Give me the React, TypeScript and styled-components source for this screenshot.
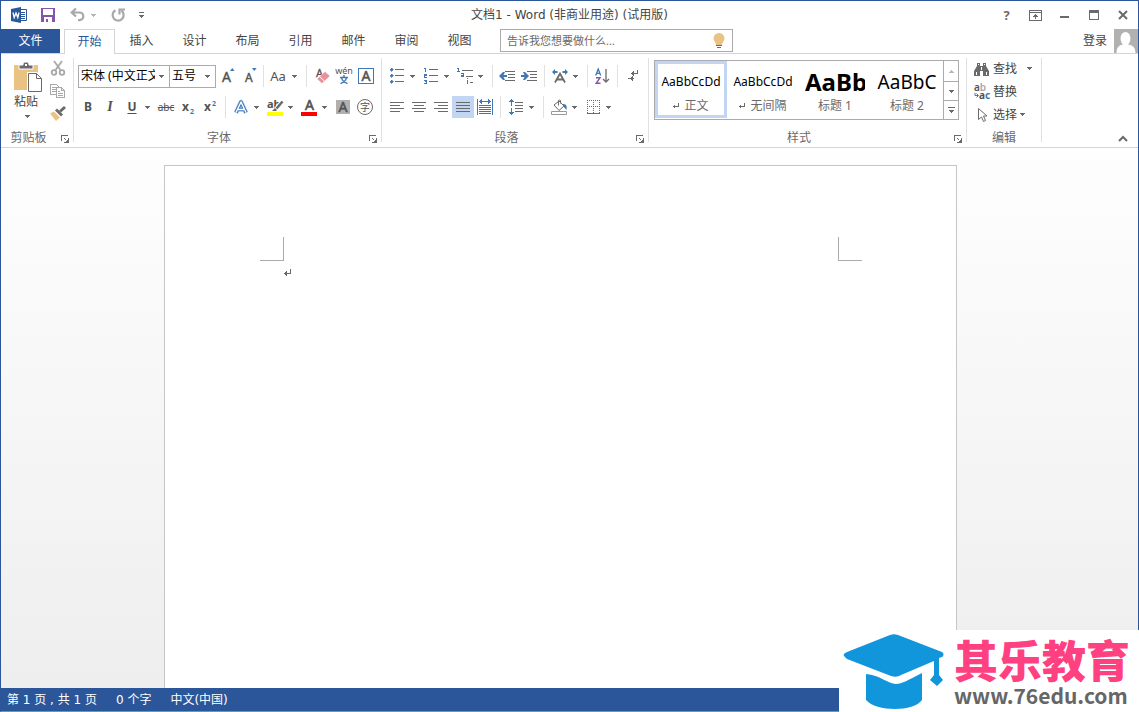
import React from "react";
import styled, { createGlobalStyle, css } from "styled-components";

const c = {
  blue: "#2b579a",
  icon: "#6a6a6a",
  iconDark: "#525252",
  accent: "#3f78b5",
  text: "#444444",
  muted: "#6a6a6a",
  line: "#d5d5d5",
  frame: "#ababab",
  select: "#c2d5f2",
  tan: "#eac282",
};

const sans = `"Noto Sans", "Noto Sans CJK SC", sans-serif`;
const wideSans = `"DejaVu Sans", "Noto Sans CJK SC", sans-serif`;

const GlobalStyle = createGlobalStyle`
  * { box-sizing: border-box; }
  body { margin: 0; font: 12px/16px ${sans}; color: ${c.text}; }
  button, input, select { font: inherit; color: inherit; }
  button { border: 0; padding: 0; background: none; cursor: pointer; }
  svg { display: block; flex: none; overflow: visible; }
`;

const Window = styled.div`
  display: flex;
  flex-direction: column;
  height: 100vh;
  min-height: 400px;
  border: 1px solid ${c.blue};
  border-bottom-color: #5a9fb5;
  background: #fff;
  overflow: hidden;
`;

const TitleBar = styled.header`
  flex: none;
  display: grid;
  grid-template-columns: 1fr auto 1fr;
  align-items: center;
  height: 28px;
`;
const Title = styled.h1`
  margin: 0;
  font: 400 12px/16px ${wideSans};
`;
const QuickAccess = styled.div`
  display: flex;
  align-items: center;
  padding-left: 10px;
`;
const QuickButton = styled.button<{ $gap: number }>`
  margin-right: ${(p) => p.$gap}px;
`;
const WindowControls = styled.div`
  display: flex;
  justify-content: flex-end;
  padding-right: 1px;
`;
const WindowButton = styled.button`
  display: grid;
  place-items: center;
  width: 29px;
  height: 24px;
  font-size: 13px;
  font-weight: 700;
  color: ${c.icon};
`;

const TabRow = styled.nav`
  flex: none;
  display: flex;
  height: 25px;
  border-bottom: 1px solid ${c.line};
`;
const FileTab = styled.button`
  width: 59px;
  margin-right: 4px;
  background: ${c.blue};
  color: #fff;
`;
const Tab = styled.button<{ $active?: boolean }>`
  width: 53px;
  ${(p) =>
    p.$active &&
    css`
      width: 51px;
      height: 25px;
      border: 1px solid ${c.line};
      border-bottom: 0;
      background: #fff;
      color: ${c.blue};
    `}
`;
const TellMe = styled.label`
  display: flex;
  align-items: center;
  width: 233px;
  height: 23px;
  margin-left: 14px;
  padding: 0 7px 0 6px;
  border: 1px solid ${c.frame};
`;
const TellMeInput = styled.input`
  flex: 1;
  min-width: 0;
  padding: 0;
  border: 0;
  outline: 0;
  font-size: 11px;
  &::placeholder { color: ${c.muted}; opacity: 1; }
`;
const Account = styled.button`
  display: flex;
  align-items: center;
  gap: 7px;
  height: 24px;
  margin-left: auto;
`;

const Ribbon = styled.section`
  flex: none;
  display: flex;
  height: 94px;
  padding: 4px 0 5px;
  border-bottom: 1px solid ${c.line};
`;
const Group = styled.div<{ $width: number }>`
  flex: none;
  display: flex;
  flex-direction: column;
  width: ${(p) => p.$width}px;
  border-right: 1px solid #e1e1e1;
`;
const GroupBody = styled.div`
  flex: 1;
  padding-left: 4px;
`;
const GroupFooter = styled.div`
  display: flex;
  align-items: center;
  height: 16px;
  margin-bottom: -4px;
`;
const GroupLabel = styled.span`
  flex: 1;
  text-align: center;
  color: ${c.muted};
`;
const Launcher = styled.button`
  width: 17px;
  padding: 1px 4px 0 5px;
`;
const Row = styled.div`
  display: flex;
  align-items: center;
  height: 22px;
  margin-top: 7px;
  & + & { margin-top: 9px; }
`;
const TextRow = styled(Row)`
  margin-left: -1px;
`;
const Tool = styled.button<{ $on?: boolean; $wide?: boolean }>`
  display: grid;
  place-items: center;
  flex: none;
  width: ${(p) => (p.$wide ? 24 : 22)}px;
  height: 22px;
  background: ${(p) => (p.$on ? c.select : "none")};
`;
const ArrowButton = styled.button`
  flex: none;
  width: 12px;
  height: 22px;
  padding-left: 2px;
`;
const Divider = styled.span<{ $width?: number }>`
  flex: none;
  width: ${(p) => p.$width ?? 9}px;
  height: 22px;
  background: linear-gradient(#e1e1e1, #e1e1e1) center / 1px 100% no-repeat;
`;
const Letter = styled.span<{ $size?: number; $bold?: boolean; $italic?: boolean }>`
  font-size: ${(p) => p.$size ?? 12}px;
  font-weight: ${(p) => (p.$bold ? 700 : 400)};
  font-style: ${(p) => (p.$italic ? "italic" : "normal")};
  color: ${c.iconDark};
`;
const SerifItalic = styled(Letter)`
  font-family: "Liberation Serif", serif;
`;
const Underlined = styled(Letter)`
  text-decoration: underline;
  text-underline-offset: 2px;
`;
const Struck = styled(Letter)`
  text-decoration: line-through;
`;

const Combo = styled.label<{ $width: number; $joined?: boolean }>`
  display: flex;
  align-items: center;
  justify-content: space-between;
  width: ${(p) => p.$width}px;
  height: 23px;
  padding: 0 5px 0 2px;
  border: 1px solid ${c.frame};
  color: #000;
  ${(p) => p.$joined && "border-right: 0;"}
`;
const ComboSelect = styled.select`
  flex: 1;
  min-width: 0;
  margin-right: 4px;
  padding: 0;
  border: 0;
  outline: 0;
  background: none;
  appearance: none;
  text-overflow: clip;
`;
const Combos = styled.div`
  display: flex;
  margin-left: 1px;
  margin-right: 1px;
`;

const Clipboard = styled.div`
  display: flex;
  justify-content: space-between;
  padding: 4px 7px 0 9px;
`;
const PasteButton = styled.button`
  display: flex;
  flex-direction: column;
  align-items: flex-start;
  height: 62px;
`;
const PasteText = styled.span`
  margin-top: 1px;
  line-height: 16px;
`;
const PasteArrow = styled.span`
  padding: 5px 0 0 11px;
`;
const ClipTools = styled.div`
  display: flex;
  flex-direction: column;
  gap: 7px;
  margin-top: -2px;
`;

const Gallery = styled.div`
  display: flex;
  width: 305px;
  height: 60px;
  margin: 2px 0 0 1px;
  border: 1px solid ${c.frame};
`;
const StyleItem = styled.button<{ $active?: boolean }>`
  display: flex;
  flex-direction: column;
  align-items: center;
  width: 72px;
  height: 57px;
  border: 3px solid ${(p) => (p.$active ? c.select : "transparent")};
  padding-top: 1px;
  overflow: hidden;
`;
const Sample = styled.span<{ $size: number; $bold?: boolean }>`
  display: block;
  flex: none;
  width: 60px;
  height: 33px;
  line-height: 34px;
  font-size: ${(p) => p.$size}px;
  font-weight: ${(p) => (p.$bold ? 700 : 400)};
  color: #000;
  white-space: nowrap;
  overflow: hidden;
`;
const StyleName = styled.span`
  display: flex;
  align-items: center;
  gap: 5px;
  height: 16px;
  color: ${c.muted};
`;
const GalleryScroll = styled.div`
  display: grid;
  grid-template-rows: 20px 19px 19px;
  width: 15px;
  border-left: 1px solid ${c.frame};
`;
const ScrollButton = styled.button`
  display: grid;
  place-items: center;
  & + & { border-top: 1px solid ${c.frame}; }
`;

const EditList = styled.div`
  margin-top: -1px;
  padding-left: 3px;
`;
const EditButton = styled.button<{ $gap?: number }>`
  display: grid;
  grid-template-columns: 16px auto auto;
  align-items: center;
  justify-content: start;
  column-gap: 3px;
  height: 23px;
  & > :nth-child(3) { margin-left: ${(p) => p.$gap ?? 0}px; }
`;
const Collapse = styled.button`
  align-self: flex-end;
  margin: 0 10px 0 auto;
`;

const Workspace = styled.main`
  flex: 1;
  min-height: 0;
  display: flex;
  justify-content: center;
  padding: 17px 18px 0 0;
  background: linear-gradient(#fefefe, #eeeeee);
`;
const Page = styled.article`
  width: 793px;
  padding: 71px 94px 0 95px;
  border: 1px solid #c6c6c6;
  border-bottom: 0;
  background: #fff;
`;
const Margins = styled.div`
  display: flex;
  justify-content: space-between;
`;
const Corner = styled.span<{ $side: "left" | "right" }>`
  width: 24px;
  height: 24px;
  border-bottom: 1px solid ${c.frame};
  ${(p) => (p.$side === "left" ? "border-right" : "border-left")}: 1px solid ${c.frame};
`;
const Paragraph = styled.p`
  margin: 8px 0 0 24px;
`;

const StatusBar = styled.footer`
  flex: none;
  display: flex;
  align-items: center;
  gap: 19px;
  height: 23px;
  padding-left: 6px;
  background: ${c.blue};
  font-family: ${wideSans};
  color: #fff;
`;

const Brand = styled.a`
  position: absolute;
  right: 0;
  bottom: 0;
  display: flex;
  gap: 10px;
  width: 300px;
  height: 82px;
  padding: 3px 0 0 5px;
  background: #fff;
  text-decoration: none;
`;
const BrandText = styled.span`
  display: flex;
  flex-direction: column;
  white-space: nowrap;
`;
const BrandName = styled.span`
  font: 900 44px/52px "Noto Sans CJK SC", sans-serif;
  color: #ff4081;
`;
const BrandSite = styled.span`
  font: 700 21px/20px "Noto Sans CJK SC", sans-serif;
  color: #666;
`;

type IconProps = { w: number; h: number; crisp?: boolean; children: React.ReactNode };
const Icon = ({ w, h, crisp, children }: IconProps) => (
  <svg
    width={w}
    height={h}
    viewBox={`0 0 ${w} ${h}`}
    fill="none"
    stroke={c.icon}
    shapeRendering={crisp ? "crispEdges" : undefined}
    aria-hidden="true"
  >
    {children}
  </svg>
);

const Caret = ({ color = c.icon }: { color?: string }) => (
  <Icon w={5} h={3} crisp>
    <path d="M0 0h5v1H0zM1 1h3v1H1zM2 2h1v1H2z" fill={color} stroke="none" />
  </Icon>
);
const Arrow = ({ label }: { label: string }) => (
  <ArrowButton aria-label={label}>
    <Caret />
  </ArrowButton>
);
const ReturnMark = () => (
  <Icon w={7} h={7} crisp>
    <path d="M6 0h1v5H0V4h6zM1 3h1v3H1zM2 2h1v5H2z" fill={c.icon} stroke="none" />
  </Icon>
);
const SmallReturnMark = () => (
  <Icon w={6} h={6} crisp>
    <path d="M5 0h1v4H0V3h5zM1 2h1v3H1z" fill={c.icon} stroke="none" />
  </Icon>
);
const GroupFoot = ({ label, launcher = true }: { label: string; launcher?: boolean }) => (
  <GroupFooter>
    <GroupLabel>{label}</GroupLabel>
    {launcher && (
      <Launcher aria-label={`${label}设置`}>
        <Icon w={8} h={8} crisp>
          <path d="M0 0h7v1H1v5H0zM3 3h1v1H3zM4 4h1v1H4zM7 3h1v5H3V7h2V6h1V5h1z" fill={c.icon} stroke="none" />
        </Icon>
      </Launcher>
    )}
  </GroupFooter>
);

const lines = (rows: [number, number, number][]) =>
  rows.map(([x, y, w]) => <path key={`${x}-${y}`} d={`M${x} ${y + 0.5}h${w}`} />);

const SmallText = ({ x, y, size, fill = c.iconDark, children }: { x: number; y: number; size: number; fill?: string; children: React.ReactNode }) => (
  <text x={x} y={y} fontSize={size} fontWeight="700" fill={fill} stroke="none" fontFamily={sans}>
    {children}
  </text>
);

const styleItems = [
  { name: "正文", sample: "AaBbCcDd", size: 12, mark: true, active: true },
  { name: "无间隔", sample: "AaBbCcDd", size: 12, mark: true },
  { name: "标题 1", sample: "AaBb", size: 24, bold: true },
  { name: "标题 2", sample: "AaBbC", size: 19 },
];

const ClipboardGroup = () => (
  <Group $width={73}>
    <GroupBody>
      <Clipboard>
        <PasteButton>
          <Icon w={28} h={31}>
            <path d="M0 3h24v25H0z" fill={c.tan} stroke="none" />
            <path d="M5 3h4V2a2 2 0 0 1 2-2h2a2 2 0 0 1 2 2v1h4v4H5z" fill={c.icon} stroke="#fff" />
            <path d="M11 2h2v2h-2z" fill="#fff" stroke="none" />
            <path d="M14.500 11.500h8l5 5v13h-13z" fill="#fff" stroke="#fff" strokeWidth="3" />
            <path d="M14.500 11.500h8l5 5v13h-13zM22.500 11.500v5h5" fill="#fff" />
          </Icon>
          <PasteText>粘贴</PasteText>
          <PasteArrow>
            <Caret />
          </PasteArrow>
        </PasteButton>
        <ClipTools>
          <button aria-label="剪切">
            <Icon w={16} h={16}>
              <g stroke="#a8a8a8" strokeWidth="1.800">
                <path d="M4 1l6.500 9M12 1L5.500 10" />
                <circle cx="4" cy="12.500" r="2.300" />
                <circle cx="12" cy="12.500" r="2.300" />
              </g>
            </Icon>
          </button>
          <button aria-label="复制">
            <Icon w={16} h={16} crisp>
              <g stroke="#a8a8a8">
                <path d="M.5 1.500h6l3 3v7h-9zM2 4.500h4M2 6.500h4M2 8.500h4" />
                <path d="M6.500 4.500h5l3 3v7h-8z" fill="#fff" />
                <path d="M11.500 4.500v3h3M8 8.500h2M8 10.500h5M8 12.500h5" />
              </g>
            </Icon>
          </button>
          <button aria-label="格式刷">
            <Icon w={16} h={16}>
              <path d="M0 7.500l4-2 6 6-4 3.500z" fill={c.tan} stroke="none" />
              <path d="M5 4.500l2-2 6 6-2 2z" fill={c.icon} stroke="none" />
              <path d="M10 5.500L15 1" strokeWidth="3" />
            </Icon>
          </button>
        </ClipTools>
      </Clipboard>
    </GroupBody>
    <GroupFoot label="剪贴板" />
  </Group>
);

const FontGroup = () => (
  <Group $width={308}>
    <GroupBody>
      <TextRow>
        <Combos>
          <Combo $width={91} $joined>
            <ComboSelect aria-label="字体">
              <option>宋体 (中文正文)</option>
            </ComboSelect>
            <Caret />
          </Combo>
          <Combo $width={47}>
            <ComboSelect aria-label="字号">
              <option>五号</option>
            </ComboSelect>
            <Caret />
          </Combo>
        </Combos>
        <Tool aria-label="增大字号">
          <Icon w={14} h={16}>
            <text x="1" y="14" fontSize="14" fill={c.iconDark} stroke={c.iconDark} strokeWidth=".4" fontFamily={sans}>A</text>
            <path d="M9 3l2.300-3 2.300 3z" fill={c.accent} stroke="none" />
          </Icon>
        </Tool>
        <Tool aria-label="减小字号">
          <Icon w={14} h={16}>
            <text x="2" y="14" fontSize="12" fill={c.iconDark} stroke={c.iconDark} strokeWidth=".4" fontFamily={sans}>A</text>
            <path d="M9 0h4.600l-2.300 3z" fill={c.accent} stroke="none" />
          </Icon>
        </Tool>
        <Divider $width={5} />
        <Tool $wide aria-label="更改大小写">
          <Letter $size={13}>Aa</Letter>
        </Tool>
        <Arrow label="大小写选项" />
        <Divider />
        <Tool aria-label="清除格式">
          <Icon w={16} h={16}>
            <text x="2" y="9" fontSize="11" fill={c.iconDark} stroke={c.iconDark} strokeWidth=".3" fontFamily={sans}>A</text>
            <path d="M3 11l8-7.500 5 4.500-8 7.500z" fill="#e8909c" stroke="#fff" strokeWidth=".5" />
            <path d="M5.500 8.500l5 4.700" stroke="#fff" />
          </Icon>
        </Tool>
        <Tool aria-label="拼音指南">
          <Icon w={18} h={18}>
            <text x="9" y="7" fontSize="9" textAnchor="middle" fill={c.iconDark} stroke="none" fontFamily={sans}>wén</text>
            <g stroke={c.accent} strokeWidth="1.400">
              <path d="M9 8v2M5 10.500h8M6.500 10.500c.5 3 3 5 6 6M11.500 10.500c-.5 3-3 5-6 6" />
            </g>
          </Icon>
        </Tool>
        <Tool aria-label="字符边框">
          <Icon w={16} h={16}>
            <path d="M.5.5h15v15H.5z" stroke={c.accent} shapeRendering="crispEdges" />
            <text x="8" y="13" fontSize="14" textAnchor="middle" fill={c.iconDark} stroke={c.iconDark} strokeWidth=".5" fontFamily={sans}>A</text>
          </Icon>
        </Tool>
      </TextRow>
      <TextRow>
        <Tool aria-label="加粗"><Letter $bold>B</Letter></Tool>
        <Tool aria-label="倾斜"><SerifItalic $bold $italic $size={14}>I</SerifItalic></Tool>
        <Tool aria-label="下划线"><Underlined $bold>U</Underlined></Tool>
        <Arrow label="下划线选项" />
        <Tool aria-label="删除线"><Struck $size={10}>abc</Struck></Tool>
        <Tool aria-label="下标">
          <Icon w={12} h={14}>
            <SmallText x={0} y={11} size={12}>x</SmallText>
            <SmallText x={8} y={14} size={7} fill={c.accent}>2</SmallText>
          </Icon>
        </Tool>
        <Tool aria-label="上标">
          <Icon w={12} h={14}>
            <SmallText x={0} y={11} size={12}>x</SmallText>
            <SmallText x={8} y={6} size={7} fill={c.accent}>2</SmallText>
          </Icon>
        </Tool>
        <Divider />
        <Tool aria-label="文本效果">
          <Icon w={16} h={16}>
            <g fontSize="15" textAnchor="middle" fontFamily={sans} strokeLinejoin="round">
              <path d="M3 14L8 3l5 11M5 10h6" stroke="#bcd5ef" strokeWidth="5" />
              <path d="M3 13.500L8 3l5 10.500M5 10.500h6" stroke={c.accent} strokeWidth="3.400" />
              <path d="M3 13.500L8 3l5 10.500M5 10.500h6" stroke="#fff" strokeWidth="1.400" />
            </g>
          </Icon>
        </Tool>
        <Arrow label="文本效果选项" />
        <Tool aria-label="突出显示">
          <Icon w={16} h={18}>
            <SmallText x={0} y={10} size={11}>ab</SmallText>
            <path d="M15.500 3L8 12" stroke="#fff" strokeWidth="4" />
            <path d="M15.500 3.500L9.500 10.500" strokeWidth="2.500" />
            <path d="M5 13l3-3 2 2-1 1z" fill={c.icon} stroke="none" />
            <path d="M0 14h16v4H0z" fill="#ffff00" stroke="none" />
          </Icon>
        </Tool>
        <Arrow label="突出显示颜色" />
        <Tool aria-label="字体颜色">
          <Icon w={16} h={18}>
            <text x="8.500" y="12" fontSize="14" textAnchor="middle" fill={c.iconDark} stroke={c.iconDark} strokeWidth=".6" fontFamily={sans}>A</text>
            <path d="M0 14h16v4H0z" fill="#f00" stroke="none" />
          </Icon>
        </Tool>
        <Arrow label="字体颜色选项" />
        <Tool aria-label="字符底纹">
          <Icon w={14} h={14}>
            <path d="M0 0h14v14H0z" fill="#b0b0b0" stroke="none" />
            <text x="7" y="12" fontSize="14" textAnchor="middle" fill={c.iconDark} stroke={c.iconDark} strokeWidth=".5" fontFamily={sans}>A</text>
          </Icon>
        </Tool>
        <Tool aria-label="带圈字符">
          <Icon w={16} h={16}>
            <circle cx="8" cy="8" r="7.500" />
            <text x="8" y="11.500" fontSize="10" textAnchor="middle" fill={c.iconDark} stroke="none" fontFamily={sans}>字</text>
          </Icon>
        </Tool>
      </TextRow>
    </GroupBody>
    <GroupFoot label="字体" />
  </Group>
);

const OutdentLines = () => <>{lines([[6, 1, 10], [9, 4, 7], [9, 7, 7], [6, 10, 10]])}</>;

const ParagraphGroup = () => (
  <Group $width={267}>
    <GroupBody>
      <Row>
        <Tool aria-label="项目符号">
          <Icon w={14} h={16} crisp>
            {lines([[5, 1, 9], [5, 7, 9], [5, 13, 9]])}
            <path d="M0 1h3v1H0zM1 0h1v3H1zM0 7h3v1H0zM1 6h1v3H1zM0 13h3v1H0zM1 12h1v3H1z" fill={c.accent} stroke={c.accent} strokeWidth=".6" />
          </Icon>
        </Tool>
        <Arrow label="项目符号选项" />
        <Tool aria-label="编号">
          <Icon w={14} h={16} crisp>
            {lines([[5, 1, 9], [5, 7, 9], [5, 13, 9]])}
            <path d="M0 0h2v4H1V1H0zM0 6h3v2H1v1h2v1H0V7h2H0zM0 12h3v4H0v-1h2v-1H1v-1H0z" fill={c.accent} stroke="none" />
          </Icon>
        </Tool>
        <Arrow label="编号选项" />
        <Tool aria-label="多级列表">
          <Icon w={17} h={17} crisp>
            {lines([[5, 2, 11], [9, 8, 7], [13, 14, 3]])}
            <path d="M0 0h2v3h1v1H0V3h1V1H0zM4 5h3v4H4V7h2V6H4zM10 10h1v1h-1zM10 12h1v4h-1z" fill={c.accent} stroke="none" />
          </Icon>
        </Tool>
        <Arrow label="多级列表选项" />
        <Divider $width={8} />
        <Tool aria-label="减少缩进">
          <Icon w={16} h={12}>
            <g shapeRendering="crispEdges"><OutdentLines /></g>
            <path d="M0 6l4-4h2L4.500 5H8v2H4.500L6 10H4z" fill={c.accent} stroke="none" />
          </Icon>
        </Tool>
        <Tool aria-label="增加缩进">
          <Icon w={16} h={12}>
            <g shapeRendering="crispEdges"><OutdentLines /></g>
            <path d="M8 6L4 2H2l1.500 3H0v2h3.500L2 10h2z" fill={c.accent} stroke="none" />
          </Icon>
        </Tool>
        <Divider />
        <Tool aria-label="中文版式">
          <Icon w={16} h={14}>
            <path d="M3 13.500l5-9 5 9M5 10.500h6" strokeWidth="1.800" />
            <path d="M0 3l3-3v2h2.500v2H3v2zM16 3l-3-3v2h-2.500v2H13v2z" fill={c.accent} stroke="none" />
          </Icon>
        </Tool>
        <Arrow label="中文版式选项" />
        <Divider $width={8} />
        <Tool aria-label="排序">
          <Icon w={14} h={17}>
            <path d="M.7 7.500L3.200 1l2.500 6.500M1.500 5.300h3.500" stroke={c.accent} strokeWidth="1.300" />
            <path d="M1 9.700h4L1.200 15.300h4.300" stroke="#8a54ab" strokeWidth="1.400" />
            <path d="M11 1v13M8 11l3 3 3-3" strokeWidth="1.300" />
          </Icon>
        </Tool>
        <Divider />
        <Tool aria-label="显示编辑标记">
          <Icon w={10} h={14} crisp>
            <path d="M9 1h1v4H5v1H4V5H3V4h1V3h1v1h4zM5 2h1v5H5zM0 9h3V8h1V7h1v5H4v-1H3v-1H0zM5 9h1v1H5z" fill={c.icon} stroke="none" />
          </Icon>
        </Tool>
      </Row>
      <Row>
        <Tool aria-label="左对齐">
          <Icon w={14} h={12} crisp>{lines([[0, 1, 14], [0, 4, 10], [0, 7, 14], [0, 10, 10]])}</Icon>
        </Tool>
        <Tool aria-label="居中">
          <Icon w={14} h={12} crisp>{lines([[0, 1, 14], [2, 4, 10], [0, 7, 14], [2, 10, 10]])}</Icon>
        </Tool>
        <Tool aria-label="右对齐">
          <Icon w={14} h={12} crisp>{lines([[0, 1, 14], [4, 4, 10], [0, 7, 14], [4, 10, 10]])}</Icon>
        </Tool>
        <Tool $on aria-label="两端对齐" aria-pressed="true">
          <Icon w={14} h={12} crisp>{lines([[0, 1, 14], [0, 4, 14], [0, 7, 14], [0, 10, 14]])}</Icon>
        </Tool>
        <Tool aria-label="分散对齐">
          <Icon w={16} h={16} crisp>
            {lines([[2, 6, 12], [2, 8, 12], [2, 10, 12], [2, 12, 12], [2, 14, 12]])}
            <path d="M0 0h1v16H0zM15 0h1v16h-1zM2 2h12v1H2zM3 1h2v3H3zM4 0h1v5H4zM11 1h2v3h-2zM11 0h1v5h-1z" fill={c.accent} stroke="none" />
          </Icon>
        </Tool>
        <Divider />
        <Tool aria-label="行距">
          <Icon w={14} h={16} crisp>
            {lines([[6, 3, 8], [6, 6, 8], [6, 9, 8], [6, 12, 8]])}
            <path d="M2 0h1v7H2zM1 1h3v1H1zM0 2h5v1H0zM2 9h1v7H2zM1 14h3v1H1zM0 13h5v1H0z" fill={c.accent} stroke="none" />
          </Icon>
        </Tool>
        <Arrow label="行距选项" />
        <Divider />
        <Tool aria-label="底纹">
          <Icon w={16} h={16}>
            <path d="M3 6l5-4 5 5-5 4.500zM7.500 6.500V1.500a1.500 1.500 0 0 1 2 0v3" />
            <path d="M12 5c4 0 4 3 3.500 6-1.500-1-2-3-3.500-4z" fill={c.accent} stroke="none" />
            <path d="M.5 12.500h15v3H.5z" fill="#fff" stroke="#999" />
          </Icon>
        </Tool>
        <Arrow label="底纹选项" />
        <Tool aria-label="边框">
          <Icon w={13} h={14} crisp>
            <path d="M0 .5h13M0 6.500h13M.5 0v13M6.500 0v13M12.500 0v13" strokeDasharray="1 1" />
            <path d="M0 13.500h13" />
          </Icon>
        </Tool>
        <Arrow label="边框选项" />
      </Row>
    </GroupBody>
    <GroupFoot label="段落" />
  </Group>
);

const StylesGroup = () => (
  <Group $width={318}>
    <GroupBody>
      <Gallery>
        {styleItems.map((s) => (
          <StyleItem key={s.name} $active={s.active}>
            <Sample $size={s.size} $bold={s.bold}>{s.sample}</Sample>
            <StyleName>
              {s.mark && <SmallReturnMark />}
              {s.name}
            </StyleName>
          </StyleItem>
        ))}
        <GalleryScroll>
          <ScrollButton aria-label="上一行" disabled>
            <Icon w={5} h={3} crisp>
              <path d="M2 0h1v1H2zM1 1h3v1H1zM0 2h5v1H0z" fill="#b8b8b8" stroke="none" />
            </Icon>
          </ScrollButton>
          <ScrollButton aria-label="下一行"><Caret /></ScrollButton>
          <ScrollButton aria-label="其他样式">
            <Icon w={7} h={7} crisp>
              <path d="M0 .5h7" />
              <path d="M1 3h5v1H1zM2 4h3v1H2zM3 5h1v1H3z" fill={c.icon} stroke="none" />
            </Icon>
          </ScrollButton>
        </GalleryScroll>
      </Gallery>
    </GroupBody>
    <GroupFoot label="样式" />
  </Group>
);

const EditingGroup = () => (
  <Group $width={75}>
    <GroupBody>
      <EditList>
        <EditButton $gap={7}>
          <Icon w={16} h={14}>
            <path d="M3 1h3v3h3V1h3v3l3 5v5H9V9H6v5H0V9l3-5z" fill={c.icon} stroke="none" />
            <path d="M2.500 10v3M12.500 10v3M4.500 2v1M10.500 2v1M7.500 5v3" stroke="#fff" />
          </Icon>
          <span>查找</span>
          <Caret />
        </EditButton>
        <EditButton>
          <Icon w={16} h={16}>
            <text x="0" y="7" fontSize="10" fontWeight="600" fill={c.iconDark} stroke="none" fontFamily={sans}>
              a<tspan fill="#a8a8a8">b</tspan>
            </text>
            <path d="M1 9v2.500h3M2.500 9.500L4.500 11.500l-2 2" stroke={c.accent} />
            <text x="5" y="15" fontSize="10" fontWeight="700" fill={c.iconDark} stroke="none" fontFamily={sans}>
              a<tspan fill={c.accent}>c</tspan>
            </text>
          </Icon>
          <span>替换</span>
        </EditButton>
        <EditButton>
          <Icon w={16} h={16}>
            <path d="M4.500 1.500v11l3-2.500 2 4.500 2-1-2-4.500h3.500z" />
          </Icon>
          <span>选择</span>
          <Caret />
        </EditButton>
      </EditList>
    </GroupBody>
    <GroupFoot label="编辑" launcher={false} />
  </Group>
);

export default function App() {
  return (
    <>
      <GlobalStyle />
      <Window>
        <TitleBar>
          <QuickAccess>
            <QuickButton $gap={14} aria-label="Word">
              <Icon w={16} h={16}>
                <path d="M8.500 2.500h7v11h-7z" fill="#fff" stroke={c.blue} />
                <path d="M10 5.500h4M10 7.500h4M10 9.500h4M10 11.500h4" stroke={c.blue} />
                <path d="M0 2l10-2v16L0 14z" fill={c.blue} stroke="none" />
                <path d="M2 5.500l1.200 5L5 6l1.800 4.500 1.200-5" stroke="#fff" strokeWidth="1.300" />
              </Icon>
            </QuickButton>
            <QuickButton $gap={15} aria-label="保存">
              <Icon w={14} h={14} crisp>
                <path d="M0 0h14v14H0z" fill="#8455ab" stroke="none" />
                <path d="M2 1h10v6H2zM3 9h8v5H3z" fill="#fff" stroke="none" />
                <path d="M5 11h2v3H5z" fill="#8455ab" stroke="none" />
              </Icon>
            </QuickButton>
            <QuickButton $gap={6} aria-label="撤消">
              <Icon w={15} h={14}>
                <path d="M6 .5L1.700 4.500l4.300 4M2 4.500h7.500a3.800 3.800 0 0 1 0 7.600H8" stroke="#a8a8a8" strokeWidth="2.200" />
              </Icon>
            </QuickButton>
            <QuickButton $gap={15} aria-label="撤消选项">
              <Caret color="#b5b5b5" />
            </QuickButton>
            <QuickButton $gap={14} aria-label="重复">
              <Icon w={14} h={14}>
                <path d="M4.500 2.200A5.500 5.500 0 1 0 10.500 2.700M8.500 6.500V1.500H14" stroke="#a8a8a8" strokeWidth="2.200" />
              </Icon>
            </QuickButton>
            <QuickButton $gap={0} aria-label="自定义快速访问工具栏">
              <Icon w={5} h={6} crisp>
                <path d="M0 .5h5" />
                <path d="M0 3h5v1H0zM1 4h3v1H1zM2 5h1v1H2z" fill={c.icon} stroke="none" />
              </Icon>
            </QuickButton>
          </QuickAccess>
          <Title>文档1 - Word (非商业用途) (试用版)</Title>
          <WindowControls>
            <WindowButton aria-label="帮助">?</WindowButton>
            <WindowButton aria-label="功能区显示选项">
              <Icon w={13} h={11} crisp>
                <path d="M.5.5h12v10H.5zM1 2.500h11M6.500 4v5M4 6.500h5M5 5.500h3" />
              </Icon>
            </WindowButton>
            <WindowButton aria-label="最小化">
              <Icon w={9} h={10} crisp><path d="M0 7h9" strokeWidth="2" /></Icon>
            </WindowButton>
            <WindowButton aria-label="最大化">
              <Icon w={10} h={10} crisp>
                <path d="M0 0h10v10H0zM1 3v6h8V3z" fill={c.icon} fillRule="evenodd" stroke="none" />
              </Icon>
            </WindowButton>
            <WindowButton aria-label="关闭">
              <Icon w={10} h={10}><path d="M1 1l8 8M9 1L1 9" strokeWidth="2" /></Icon>
            </WindowButton>
          </WindowControls>
        </TitleBar>
        <TabRow>
          <FileTab>文件</FileTab>
          <Tab $active>开始</Tab>
          {["插入", "设计", "布局", "引用", "邮件", "审阅", "视图"].map((t) => (
            <Tab key={t}>{t}</Tab>
          ))}
          <TellMe>
            <TellMeInput aria-label="告诉我您想要做什么" placeholder="告诉我您想要做什么..." />
            <Icon w={12} h={16}>
              <path d="M6 0a5.500 5.500 0 0 1 5.500 5.500c0 2.500-2.500 4-2.500 6.500H3C3 9.500.5 8 .5 5.500A5.500 5.500 0 0 1 6 0z" fill={c.tan} stroke="none" />
              <path d="M3 12h6v1H3zM4 14h4v1H4z" fill={c.icon} stroke="none" shapeRendering="crispEdges" />
            </Icon>
          </TellMe>
          <Account>
            登录
            <Icon w={24} h={24}>
              <path d="M0 0h24v24H0z" fill="#b1b1b1" stroke="none" />
              <path d="M2.500 24c0-6 3-8 6.500-8.500C5 12 6 3 11.500 3S18 12 14 15.500c4 .5 7.500 2.500 7.500 8.500z" fill="#fff" stroke="none" />
            </Icon>
          </Account>
        </TabRow>
        <Ribbon>
          <ClipboardGroup />
          <FontGroup />
          <ParagraphGroup />
          <StylesGroup />
          <EditingGroup />
          <Collapse aria-label="折叠功能区">
            <Icon w={10} h={6}><path d="M1 5l4-4 4 4" strokeWidth="2" /></Icon>
          </Collapse>
        </Ribbon>
        <Workspace>
          <Page>
            <Margins>
              <Corner $side="left" />
              <Corner $side="right" />
            </Margins>
            <Paragraph><ReturnMark /></Paragraph>
          </Page>
        </Workspace>
        <StatusBar>
          <span>第 1 页 , 共 1 页</span>
          <span>0 个字</span>
          <span>中文(中国)</span>
        </StatusBar>
      </Window>
      <Brand href="#">
        <Icon w={100} h={78}>
          <path d="M22 41c14 1 22 10 30 10 6 0 12-4 26-11v27c-8 12-46 12-56 0z" fill="#1296db" stroke="none" />
          <path d="M0 23c-1-2 1-3 3-4L46 2c3-1 5-1 8 0l44 17c2 1 2 4 0 5l-3 1v17l4 5-6 6-7-6 4-5V28L57 42c-3 2-6 2-10 1L3 26z" fill="#1296db" stroke="none" />
        </Icon>
        <BrandText>
          <BrandName>其乐教育</BrandName>
          <BrandSite>www.76edu.com</BrandSite>
        </BrandText>
      </Brand>
    </>
  );
}
